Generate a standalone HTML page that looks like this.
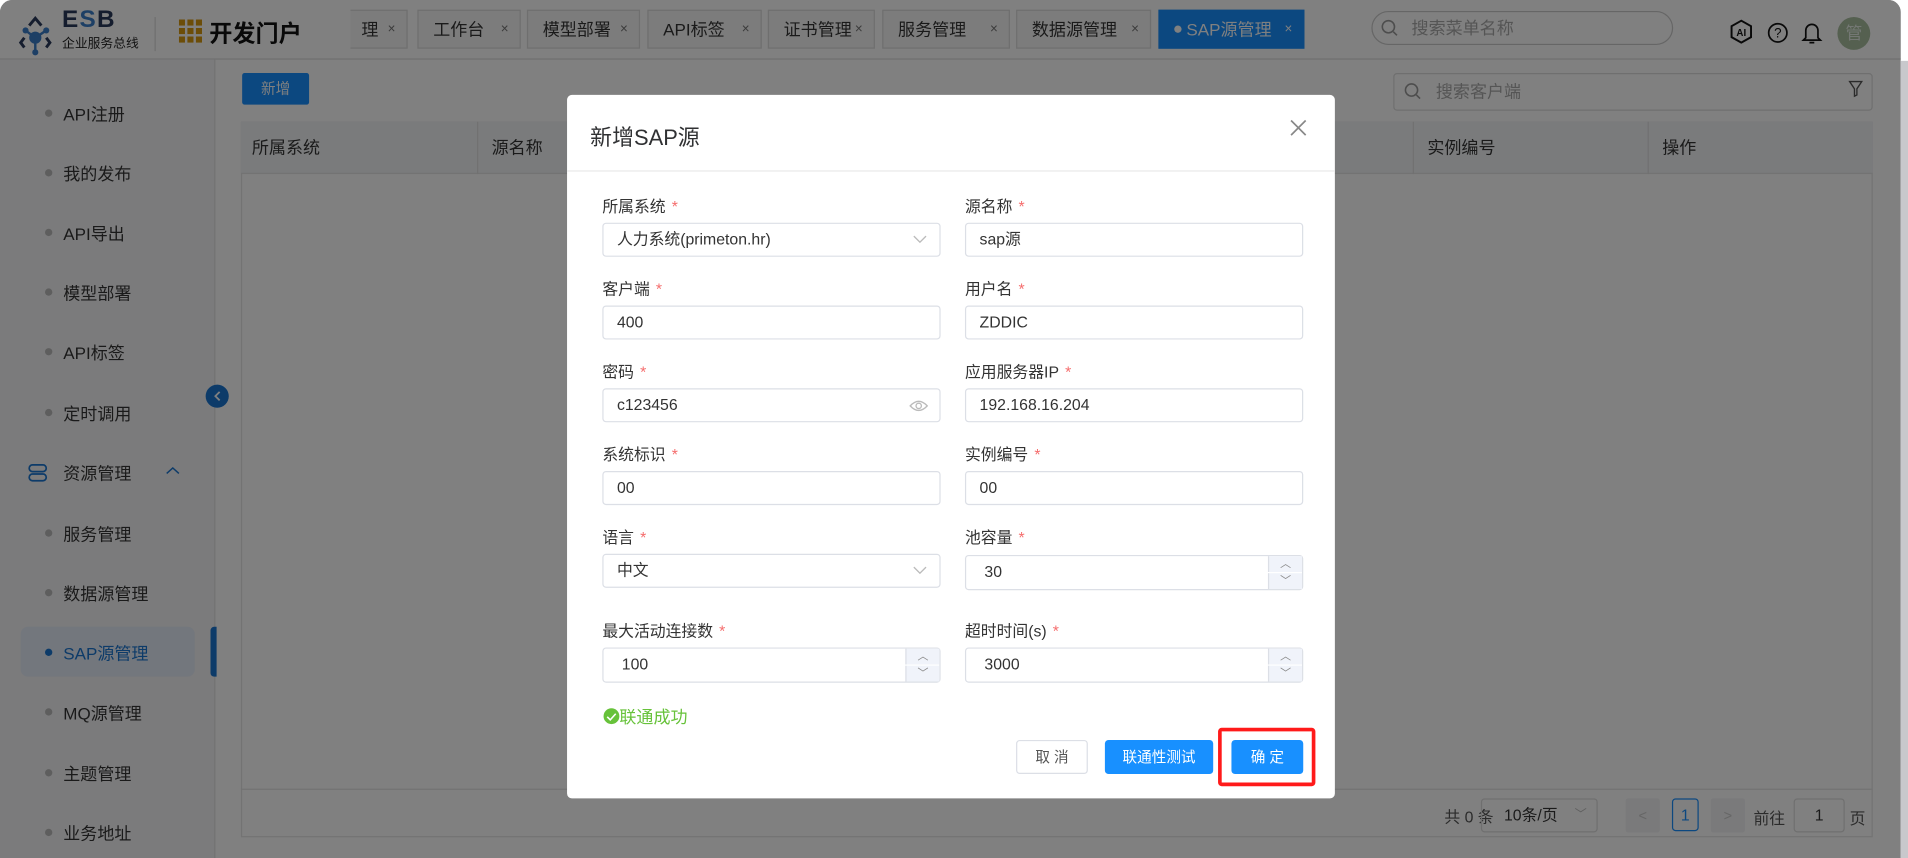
<!DOCTYPE html>
<html><head><meta charset="utf-8"><style>
*{box-sizing:border-box;margin:0;padding:0}
html,body{width:1908px;height:858px;overflow:hidden;background:#fff}
body{font-family:"Liberation Sans","Noto Sans CJK SC",sans-serif;color:#1a1a1a}
#w{position:absolute;left:0;top:0;width:1568px;height:705px;transform:scale(1.21684,1.21702);transform-origin:0 0;overflow:hidden}
.a{position:absolute;white-space:nowrap}
#page{position:absolute;left:0;top:0;width:1562px;height:705px;background:#808080;border-radius:10px 10px 0 0;overflow:hidden;z-index:1}
.tab{position:absolute;top:8px;height:32px;border:1px solid #6f6f6f;background:#7c7c7c;font-size:14px;line-height:30px;padding-left:12px;color:#1a1a1a;white-space:nowrap}
.tab i{font-style:normal;position:absolute;right:9px;font-size:11px;color:#3b3b3b}
.side{font-size:14px;color:#1a1a1a}
.si{position:absolute;left:52px;white-space:nowrap}
.dot{position:absolute;left:37px;width:6px;height:6px;border-radius:50%;background:#5e5e5e}
#dlg{position:absolute;left:466px;top:78px;width:631px;height:578px;background:#fff;border-radius:4px;z-index:6}
#form{position:absolute;left:0;top:0;width:1568px;height:705px;z-index:7}
.lb{position:absolute;font-size:13px;color:#333;white-space:nowrap}
.lb b{color:#f56c6c;font-weight:normal;margin-left:5px}
.in{position:absolute;width:278px;height:28px;border:1px solid #dcdfe6;border-radius:3px;font-size:13px;line-height:26px;padding-left:11px;color:#333;white-space:nowrap;background:#fff}
.sp{position:absolute;right:0;width:28px;height:13px;background:#f0f3fa;border-left:1px solid #dcdfe6;font-size:9px;color:#888;text-align:center;line-height:13px}
.btn{position:absolute;top:608px;height:28px;border-radius:3px;font-size:12px;line-height:28px;text-align:center;white-space:nowrap}
</style></head><body><div id="w">
<div id="page">
<div class="a" style="left:0;top:0;width:1562px;height:49px;border-bottom:1px solid #6f6f6f;background:#808080"></div>
<svg class="a" style="left:14px;top:11px" width="34" height="36" viewBox="0 0 34 36"><path d="M10 10 L15 4 L20 10" stroke="#151d2e" stroke-width="2.4" fill="none"/><path d="M6 20 L3 24 L6 28" stroke="#151d2e" stroke-width="2.4" fill="none"/><path d="M24 20 L27 24 L24 28" stroke="#151d2e" stroke-width="2.4" fill="none"/><circle cx="15" cy="20" r="5" fill="#1d3f65"/><path d="M15 20 L7 14 M15 20 L24 14 M15 20 L15 32" stroke="#1d3f65" stroke-width="2"/><circle cx="7" cy="14" r="2.5" fill="#1d3f65"/><circle cx="24" cy="14" r="2.5" fill="#1d3f65"/><circle cx="15" cy="32" r="2.5" fill="#1d3f65"/></svg>
<div class="a" style="left:51px;top:5px;font-size:20px;font-weight:bold;color:#151d2e;letter-spacing:1px">E<span style="color:#1d3f65">S</span>B</div>
<div class="a" style="left:51px;top:28px;font-size:10.5px;color:#111">企业服务总线</div>
<div class="a" style="left:127px;top:14px;width:1px;height:28px;background:#6f6f6f"></div>
<svg class="a" style="left:147px;top:16px" width="20" height="20"><g fill="#6c4d08"><rect x="0" y="0" width="5" height="5"/><rect x="7" y="0" width="5" height="5"/><rect x="14" y="0" width="5" height="5"/><rect x="0" y="7" width="5" height="5"/><rect x="7" y="7" width="5" height="5"/><rect x="14" y="7" width="5" height="5"/><rect x="0" y="14" width="5" height="5"/><rect x="7" y="14" width="5" height="5"/><rect x="14" y="14" width="5" height="5"/></g></svg>
<div class="a" style="left:172px;top:13px;font-size:19px;font-weight:bold;color:#090909">开发门户</div>
<div class="a" style="left:288px;top:0;width:800px;height:48px;overflow:hidden">
<div class="tab" style="left:-4px;width:51px">理<i>×</i></div>
<div class="tab" style="left:55px;width:85px">工作台<i>×</i></div>
<div class="tab" style="left:145px;width:93px">模型部署<i>×</i></div>
<div class="tab" style="left:244px;width:94px">API标签<i>×</i></div>
<div class="tab" style="left:343px;width:88px">证书管理<i>×</i></div>
<div class="tab" style="left:437px;width:105px">服务管理<i>×</i></div>
<div class="tab" style="left:547px;width:111px">数据源管理<i>×</i></div>
<div class="tab" style="left:664px;width:120px;background:#0c4880;border-color:#0c4880;color:#808080"><span style="display:inline-block;width:6px;height:6px;border-radius:50%;background:#808080;vertical-align:middle;margin-right:4px;position:relative;top:-1px"></span>SAP源管理<i style="color:#808080">×</i></div>
</div>
<div class="a" style="left:1127px;top:9px;width:248px;height:28px;border:1px solid #666;border-radius:14px;font-size:14px;line-height:26px;padding-left:32px;color:#555">搜索菜单名称</div>
<svg class="a" style="left:1135px;top:16px" width="14" height="14"><circle cx="6" cy="6" r="5" stroke="#4d4d4d" fill="none" stroke-width="1.3"/><path d="M10 10 L13 13" stroke="#4d4d4d" stroke-width="1.3"/></svg>
<svg class="a" style="left:1421px;top:16px" width="20" height="20" viewBox="0 0 20 20"><path d="M10 1 L18 5.5 L18 14.5 L10 19 L2 14.5 L2 5.5Z" stroke="#090909" stroke-width="1.6" fill="none"/><text x="10" y="13.5" font-size="8" font-weight="bold" text-anchor="middle" fill="#090909" font-family="Liberation Sans">AI</text></svg>
<svg class="a" style="left:1452px;top:18px" width="18" height="18"><circle cx="9" cy="9" r="7.5" stroke="#090909" stroke-width="1.4" fill="none"/><text x="9" y="13" font-size="11" text-anchor="middle" fill="#090909" font-family="Liberation Sans">?</text></svg>
<svg class="a" style="left:1480px;top:17px" width="18" height="20"><path d="M4 14 L4 8 A5 5 0 0 1 14 8 L14 14 L16 16 L2 16 Z" stroke="#090909" stroke-width="1.4" fill="none"/><path d="M7 18 L11 18" stroke="#090909" stroke-width="1.4"/></svg>
<div class="a" style="left:1510px;top:14px;width:27px;height:27px;border-radius:50%;background:#556050;color:#747874;font-size:14px;text-align:center;line-height:27px">管</div>
<div class="a side" style="left:0;top:49px;width:177px;height:656px;background:#7b7b7c;border-right:1px solid #727272"></div>
<div class="dot" style="top:90px"></div><div class="si side" style="top:84px">API注册</div>
<div class="dot" style="top:139px"></div><div class="si side" style="top:133px">我的发布</div>
<div class="dot" style="top:188px"></div><div class="si side" style="top:182px">API导出</div>
<div class="dot" style="top:237px"></div><div class="si side" style="top:231px">模型部署</div>
<div class="dot" style="top:286px"></div><div class="si side" style="top:280px">API标签</div>
<div class="dot" style="top:336px"></div><div class="si side" style="top:330px">定时调用</div>
<svg class="a" style="left:23px;top:381px" width="16" height="15"><rect x="1" y="1" width="14" height="5.5" rx="2.7" stroke="#0d3b69" stroke-width="1.4" fill="none"/><rect x="1" y="8.5" width="14" height="5.5" rx="2.7" stroke="#0d3b69" stroke-width="1.4" fill="none"/></svg>
<div class="si side" style="top:379px">资源管理</div>
<svg class="a" style="left:136px;top:383px" width="12" height="8"><path d="M1 6 L6 1.5 L11 6" stroke="#0d3b69" stroke-width="1.2" fill="none"/></svg>
<div class="dot" style="top:435px"></div><div class="si side" style="top:429px">服务管理</div>
<div class="dot" style="top:484px"></div><div class="si side" style="top:478px">数据源管理</div>
<div class="a" style="left:17px;top:515px;width:143px;height:41px;background:#73777d;border-radius:6px"></div>
<div class="dot" style="top:533px;background:#0d3b69"></div><div class="si side" style="top:527px;color:#0d3b69">SAP源管理</div>
<div class="a" style="left:173px;top:515px;width:5px;height:41px;background:#0d3b69;border-radius:3px 0 0 3px"></div>
<div class="dot" style="top:582px"></div><div class="si side" style="top:576px">MQ源管理</div>
<div class="dot" style="top:632px"></div><div class="si side" style="top:626px">主题管理</div>
<div class="dot" style="top:681px"></div><div class="si side" style="top:675px">业务地址</div>
<div class="a" style="left:169px;top:316px;width:19px;height:19px;border-radius:50%;background:#0d3b69"></div>
<svg class="a" style="left:174px;top:320px" width="10" height="11"><path d="M6.5 2 L3 5.5 L6.5 9" stroke="#808080" stroke-width="1.5" fill="none"/></svg>
<div class="a" style="left:199px;top:60px;width:55px;height:26px;background:#0c4880;border-radius:2px;color:#808080;font-size:12px;text-align:center;line-height:26px">新增</div>
<div class="a" style="left:1145px;top:60px;width:394px;height:31px;border:1px solid #6f6f6f;border-radius:3px;font-size:14px;line-height:29px;padding-left:34px;color:#555">搜索客户端</div>
<svg class="a" style="left:1154px;top:68px" width="14" height="14"><circle cx="6" cy="6" r="5" stroke="#4d4d4d" fill="none" stroke-width="1.3"/><path d="M10 10 L13 13" stroke="#4d4d4d" stroke-width="1.3"/></svg>
<svg class="a" style="left:1519px;top:66px" width="12" height="14"><path d="M1 1 L11 1 L7 7 L7 12 L5 13 L5 7Z" stroke="#2b2b2b" stroke-width="1.1" fill="none"/></svg>
<div class="a" style="left:198px;top:100px;width:1341px;height:588px;border:1px solid #737373"></div>
<div class="a" style="left:198px;top:100px;width:1341px;height:43px;background:#7a7b7c;border-bottom:1px solid #737373;font-size:14px;line-height:43px;color:#1a1a1a">
<span class="a" style="left:9px">所属系统</span><span class="a" style="left:206px">源名称</span><span class="a" style="left:975px">实例编号</span><span class="a" style="left:1168px">操作</span>
<div class="a" style="left:194px;top:0;width:1px;height:43px;background:#717171"></div>
<div class="a" style="left:963px;top:0;width:1px;height:43px;background:#717171"></div>
<div class="a" style="left:1156px;top:0;width:1px;height:43px;background:#717171"></div>
</div>
<div class="a" style="left:198px;top:648px;width:1341px;height:1px;background:#737373"></div>
<div class="a" style="left:1187px;top:661px;font-size:13px;color:#2b2b2b">共 0 条</div>
<div class="a" style="left:1217px;top:656px;width:96px;height:28px;border:1px solid #6f6f6f;border-radius:3px;font-size:13px;line-height:26px;padding-left:18px">10条/页<span style="position:absolute;right:8px;color:#5e5e5e;font-size:10px">﹀</span></div>
<div class="a" style="left:1336px;top:656px;width:28px;height:28px;background:#7a7a7b;border-radius:2px;color:#666;text-align:center;line-height:28px;font-size:12px">&lt;</div>
<div class="a" style="left:1374px;top:656px;width:22px;height:27px;border:1px solid #0c4880;border-radius:3px;color:#0c4880;text-align:center;line-height:25px;font-size:13px">1</div>
<div class="a" style="left:1406px;top:656px;width:28px;height:28px;background:#7a7a7b;border-radius:2px;color:#666;text-align:center;line-height:28px;font-size:12px">&gt;</div>
<div class="a" style="left:1441px;top:662px;font-size:13px;color:#2b2b2b">前往</div>
<div class="a" style="left:1474px;top:656px;width:42px;height:28px;border:1px solid #6f6f6f;border-radius:3px;text-align:center;line-height:26px;font-size:13px">1</div>
<div class="a" style="left:1520px;top:662px;font-size:13px;color:#2b2b2b">页</div>
</div>
<div id="dlg">
<div class="a" style="left:19px;top:21px;font-size:18px;color:#303133">新增SAP源</div>
<svg class="a" style="left:594px;top:20px" width="14" height="14"><path d="M1 1 L13 13 M13 1 L1 13" stroke="#888" stroke-width="1.4"/></svg>
<div class="a" style="left:0;top:62px;width:631px;height:1px;background:#e8e8e8"></div>
</div>
<div class="a" style="left:1562px;top:50px;width:6px;height:655px;background:#c8c8cc;z-index:8"></div>
<div id="form">
<div class="lb" style="left:495px;top:159px">所属系统<b>*</b></div>
<div class="lb" style="left:793px;top:159px">源名称<b>*</b></div>
<div class="in" style="left:495px;top:183px">人力系统(primeton.hr)<svg class="a" style="right:10px;top:9px" width="12" height="8"><path d="M1 1 L6 6 L11 1" stroke="#bbb" stroke-width="1.1" fill="none"/></svg></div>
<div class="in" style="left:793px;top:183px">sap源</div>
<div class="lb" style="left:495px;top:227px">客户端<b>*</b></div>
<div class="lb" style="left:793px;top:227px">用户名<b>*</b></div>
<div class="in" style="left:495px;top:251px">400</div>
<div class="in" style="left:793px;top:251px">ZDDIC</div>
<div class="lb" style="left:495px;top:295px">密码<b>*</b></div>
<div class="lb" style="left:793px;top:295px">应用服务器IP<b>*</b></div>
<div class="in" style="left:495px;top:319px">c123456<svg class="a" style="right:9px;top:8px" width="16" height="11"><path d="M1 5.5 Q8 -2 15 5.5 Q8 13 1 5.5Z" stroke="#bbb" stroke-width="1.1" fill="none"/><circle cx="8" cy="5.5" r="2.2" stroke="#bbb" stroke-width="1.1" fill="none"/></svg></div>
<div class="in" style="left:793px;top:319px">192.168.16.204</div>
<div class="lb" style="left:495px;top:363px">系统标识<b>*</b></div>
<div class="lb" style="left:793px;top:363px">实例编号<b>*</b></div>
<div class="in" style="left:495px;top:387px">00</div>
<div class="in" style="left:793px;top:387px">00</div>
<div class="lb" style="left:495px;top:431px">语言<b>*</b></div>
<div class="lb" style="left:793px;top:431px">池容量<b>*</b></div>
<div class="in" style="left:495px;top:455px">中文<svg class="a" style="right:10px;top:9px" width="12" height="8"><path d="M1 1 L6 6 L11 1" stroke="#bbb" stroke-width="1.1" fill="none"/></svg></div>
<div class="in" style="left:793px;top:456px;height:29px;padding-left:15px">30<div class="sp" style="top:0">︿</div><div class="sp" style="top:14px">﹀</div></div>
<div class="lb" style="left:495px;top:508px">最大活动连接数<b>*</b></div>
<div class="lb" style="left:793px;top:508px">超时时间(s)<b>*</b></div>
<div class="in" style="left:495px;top:532px;height:29px;padding-left:15px">100<div class="sp" style="top:0">︿</div><div class="sp" style="top:14px">﹀</div></div>
<div class="in" style="left:793px;top:532px;height:29px;padding-left:15px">3000<div class="sp" style="top:0">︿</div><div class="sp" style="top:14px">﹀</div></div>
<div class="a" style="left:496px;top:582px;width:13px;height:13px;border-radius:50%;background:#67c23a"></div>
<svg class="a" style="left:498px;top:585px" width="9" height="8"><path d="M1 4 L3.5 6.5 L8 1.5" stroke="#fff" stroke-width="1.3" fill="none"/></svg>
<div class="a" style="left:509px;top:579px;font-size:14px;color:#67c23a">联通成功</div>
<div class="btn" style="left:835px;width:59px;border:1px solid #dcdfe6;color:#555;background:#fff;line-height:26px">取 消</div>
<div class="btn" style="left:908px;width:89px;background:#1890ff;color:#fff">联通性测试</div>
<div class="btn" style="left:1012px;width:59px;background:#1890ff;color:#fff">确 定</div>
<div class="a" style="left:1001px;top:598px;width:80px;height:48px;border:3px solid #ff1a1a;border-radius:3px"></div>
</div>
</div></body></html>
